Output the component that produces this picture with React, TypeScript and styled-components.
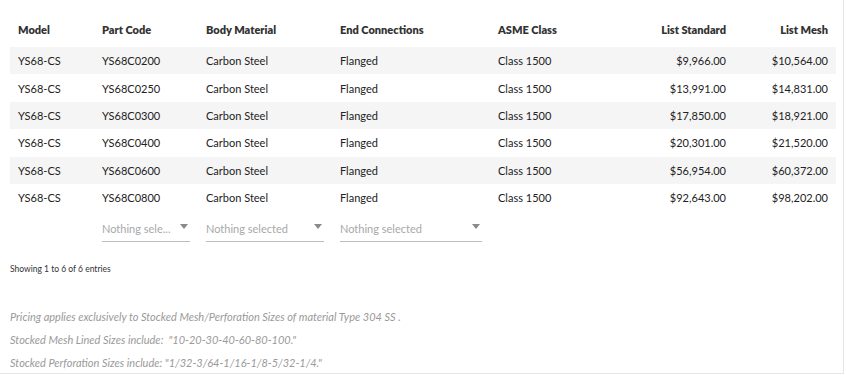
import styled, { createGlobalStyle } from 'styled-components';

const GlobalStyle = createGlobalStyle`
  html, body {
    margin: 0;
    padding: 0;
    background: #fff;
  }
  body {
    font-family: Lato, 'Noto Sans', sans-serif;
    color: #333;
  }
`;

const rows = [
  ['YS68C0200', '$9,966.00', '$10,564.00'],
  ['YS68C0250', '$13,991.00', '$14,831.00'],
  ['YS68C0300', '$17,850.00', '$18,921.00'],
  ['YS68C0400', '$20,301.00', '$21,520.00'],
  ['YS68C0600', '$56,954.00', '$60,372.00'],
  ['YS68C0800', '$92,643.00', '$98,202.00']
];

const columns = '84px 104px 134px 158px 140px 104px 102px';

const ProductTable = () => {
  return (
    <Page>
      <GlobalStyle />
      <Table>
        <HeadRow>
          <HeadCell>Model</HeadCell>
          <HeadCell>Part Code</HeadCell>
          <HeadCell>Body Material</HeadCell>
          <HeadCell>End Connections</HeadCell>
          <HeadCell>ASME Class</HeadCell>
          <HeadCell $right>List Standard</HeadCell>
          <HeadCell $right>List Mesh</HeadCell>
        </HeadRow>

        {rows.map(([code, standard, mesh], i) => (
          <Row key={code} $striped={i % 2 === 0}>
            <Cell>YS68-CS</Cell>
            <Cell>{code}</Cell>
            <Cell>Carbon Steel</Cell>
            <Cell>Flanged</Cell>
            <Cell>Class 1500</Cell>
            <Cell $right>{standard}</Cell>
            <Cell $right>{mesh}</Cell>
          </Row>
        ))}

        <FilterRow>
          <div />
          <FilterCell>
            <Select>
              <span>Nothing sele...</span>
              <Caret />
            </Select>
          </FilterCell>
          <FilterCell>
            <Select>
              <span>Nothing selected</span>
              <Caret />
            </Select>
          </FilterCell>
          <FilterCell>
            <Select>
              <span>Nothing selected</span>
              <Caret />
            </Select>
          </FilterCell>
        </FilterRow>
      </Table>

      <Info>Showing 1 to 6 of 6 entries</Info>

      <Notes>
        <p>Pricing applies exclusively to Stocked Mesh/Perforation Sizes of material Type 304 SS .</p>
        <p>Stocked Mesh Lined Sizes include:&nbsp; "10-20-30-40-60-80-100."</p>
        <p>Stocked Perforation Sizes include: "1/32-3/64-1/16-1/8-5/32-1/4."</p>
      </Notes>
    </Page>
  );
};

const Page = styled.div`
  width: 833px;
  height: 363px;
  padding: 10px 0 0 10px;
  box-sizing: content-box;
  border-right: 1px solid #e6e6e6;
  border-bottom: 1px solid #e6e6e6;
  overflow: hidden;
`;

const Table = styled.div`
  width: 826px;
  font-size: 11px;
`;

const HeadRow = styled.div`
  display: grid;
  grid-template-columns: ${columns};
`;

const HeadCell = styled.div<{ $right?: boolean }>`
  padding: 13px 8px 11px;
  line-height: 13px;
  font-weight: 800;
  color: #333;
  text-align: ${(p) => (p.$right ? 'right' : 'left')};
`;

const Row = styled.div<{ $striped?: boolean }>`
  display: grid;
  grid-template-columns: ${columns};
  height: 27.4px;
  align-items: center;
  background: ${(p) => (p.$striped ? '#f5f5f5' : '#fff')};
`;

const Cell = styled.div<{ $right?: boolean }>`
  padding: 0 8px;
  line-height: 13px;
  color: #222;
  text-align: ${(p) => (p.$right ? 'right' : 'left')};
`;

const FilterRow = styled.div`
  display: grid;
  grid-template-columns: ${columns};
  padding-top: 8px;
`;

const FilterCell = styled.div`
  padding: 0 8px;
`;

const Select = styled.div`
  display: flex;
  align-items: center;
  justify-content: space-between;
  height: 19px;
  padding: 0 2px 3px 0;
  border-bottom: 1px solid #bdbdbd;
  color: #a8a8a8;
  font-size: 11px;
`;

const Caret = styled.span`
  width: 0;
  height: 0;
  margin-top: -5px;
  border-left: 4px solid transparent;
  border-right: 4px solid transparent;
  border-top: 5px solid #8a8a8a;
`;

const Info = styled.div`
  margin-top: 22px;
  font-size: 8.5px;
  color: #333;
`;

const Notes = styled.div`
  margin-top: 36px;
  font-size: 11px;
  font-style: italic;
  color: #9a9a9a;

  p {
    margin: 0 0 10px;
    line-height: 13px;
  }
`;

export default ProductTable;
